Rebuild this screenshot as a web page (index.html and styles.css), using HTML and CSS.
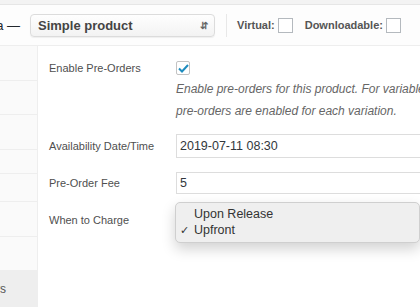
FILE: index.html
```html
<!DOCTYPE html>
<html lang="en">
<head>
    <meta charset="UTF-8">
    <title>Product data</title>
    <link rel="stylesheet" href="styles.css">
</head>
<body>
    <div class="topstrip"></div>
    <div class="panel">
        <div class="panel-header">
            <span class="title">Product data —</span>
            <div class="type-select">
                <span>Simple product</span>
                <span class="arrows">&#8693;</span>
            </div>
            <span class="sep"></span>
            <label class="opt">Virtual: <span class="box"></span></label>
            <label class="opt">Downloadable: <span class="box"></span></label>
        </div>

        <div class="panel-body">
            <ul class="tabs">
                <li class="t1"></li>
                <li class="t2"></li>
                <li class="t1"></li>
                <li class="t3"></li>
                <li class="t4"></li>
                <li class="t1"></li>
                <li class="t2"></li>
                <li class="active">Pre-Orders</li>
            </ul>

            <div class="fields">
                <div class="row row-check">
                    <div class="label">Enable Pre-Orders</div>
                    <div class="value">
                        <span class="checkbox">
                            <svg width="11" height="9" viewBox="0 0 11 9"><path d="M1 4.5 L4 7.5 L10 1" fill="none" stroke="#1e8cbe" stroke-width="2"/></svg>
                        </span>
                        <p class="desc">Enable pre-orders for this product. For variable products, pre-orders are enabled for each variation.</p>
                    </div>
                </div>

                <div class="row row-date">
                    <div class="label">Availability Date/Time</div>
                    <div class="value"><div class="input">2019-07-11 08:30</div></div>
                </div>

                <div class="row row-fee">
                    <div class="label">Pre-Order Fee</div>
                    <div class="value"><div class="input">5</div></div>
                </div>

                <div class="row row-charge">
                    <div class="label">When to Charge</div>
                    <div class="value">
                        <div class="popup">
                            <div class="popup-item">Upon Release</div>
                            <div class="popup-item"><span class="tick">&#10003;</span>Upfront</div>
                        </div>
                    </div>
                </div>
            </div>
        </div>
    </div>
</body>
</html>
```

FILE: styles.css
```css
body {
    margin: 0;
    font-family: "Liberation Sans", Arial, sans-serif;
    font-size: 12px;
    color: #555;
    background: #fff;
    width: 420px;
    height: 307px;
    overflow: hidden;
}

.topstrip {
    height: 4px;
    background: #f3f3f3;
    border-bottom: 1px solid #e6e6e6;
}

.panel {
    margin-left: -113px;
}

.panel-header {
    display: flex;
    align-items: center;
    height: 40px;
    background: #fdfdfd;
    border-bottom: 1px solid #eeeeee;
}

.title {
    width: 133px;
    flex-shrink: 0;
    text-align: right;
    white-space: nowrap;
    font-size: 13px;
    color: #23282d;
}

.type-select {
    display: flex;
    align-items: center;
    justify-content: space-between;
    box-sizing: border-box;
    flex-shrink: 0;
    width: 185px;
    height: 23px;
    margin-left: 10px;
    padding: 0 6px 0 7px;
    border: 1px solid #dcdcdc;
    border-radius: 4px;
    background: linear-gradient(#fefefe, #f3f3f3);
    box-shadow: 0 1px 1px rgba(0, 0, 0, 0.06);
    font-size: 13px;
    font-weight: bold;
    color: #444;
}

.arrows {
    font-size: 10px;
    color: #666;
}

.sep {
    flex-shrink: 0;
    width: 1px;
    height: 23px;
    margin: 0 10px 0 11px;
    background: #e8e8e8;
}

.opt {
    display: flex;
    align-items: center;
    flex-shrink: 0;
    font-weight: bold;
    font-size: 11px;
    color: #555;
    margin-right: 12px;
}

.box {
    display: inline-block;
    width: 13px;
    height: 13px;
    margin-left: 3px;
    border: 1px solid #b4b9be;
    background: #fff;
}

.panel-body {
    display: flex;
}

.tabs {
    list-style: none;
    flex-shrink: 0;
    margin: 0;
    padding: 0;
    width: 150px;
    height: 262px;
    background: #fafafa;
    border-right: 1px solid #eeeeee;
}

.tabs li {
    box-sizing: border-box;
    border-bottom: 1px solid #eeeeee;
}

.tabs .t1 { height: 35px; }
.tabs .t2 { height: 34px; }
.tabs .t3 { height: 24px; }
.tabs .t4 { height: 28px; }

.tabs li.active {
    height: 36px;
    line-height: 36px;
    background: #eeeeee;
    border-bottom: none;
    color: #555;
    font-size: 12px;
    white-space: nowrap;
    text-align: right;
    padding-right: 31px;
}

.fields {
    flex: 1;
    padding-top: 14px;
}

.row {
    display: flex;
}

.label {
    width: 127px;
    padding-left: 11px;
    flex-shrink: 0;
    white-space: nowrap;
    font-size: 11px;
    color: #4f4f4f;
}

.value {
    flex: 1;
    position: relative;
}

.row-check .label {
    padding-top: 2px;
}

.checkbox {
    display: flex;
    align-items: center;
    justify-content: center;
    box-sizing: border-box;
    width: 14px;
    height: 14px;
    margin-top: 1px;
    border: 1px solid #c3c3c3;
    border-radius: 2px;
    background: #fff;
}

.desc {
    margin: 3px 0 0;
    width: 320px;
    font-style: italic;
    line-height: 22px;
    color: #666;
}

.row-date {
    margin-top: 12px;
}

.input {
    box-sizing: border-box;
    height: 24px;
    width: 260px;
    padding: 0 3px;
    border: 1px solid #dddddd;
    line-height: 22px;
    font-size: 12.5px;
    color: #32373c;
}

.row-date .label {
    line-height: 24px;
}

.row-fee {
    margin-top: 14px;
}

.row-fee .input {
    height: 22px;
    line-height: 20px;
}

.row-fee .label {
    line-height: 22px;
}

.row-charge {
    margin-top: 14px;
    height: 40px;
}

.row-charge .label {
    padding-top: 6px;
}

.popup {
    position: absolute;
    left: -1px;
    top: -6px;
    box-sizing: border-box;
    width: 245px;
    height: 41px;
    padding-top: 3px;
    border: 1px solid #cfcfcf;
    border-radius: 5px;
    background: #efefef;
    box-shadow: 0 6px 14px rgba(0, 0, 0, 0.18);
    font-size: 12.5px;
    color: #333;
}

.popup-item {
    height: 16px;
    line-height: 16px;
    padding-left: 18px;
    position: relative;
}

.tick {
    position: absolute;
    left: 4px;
    font-size: 11px;
}
```
